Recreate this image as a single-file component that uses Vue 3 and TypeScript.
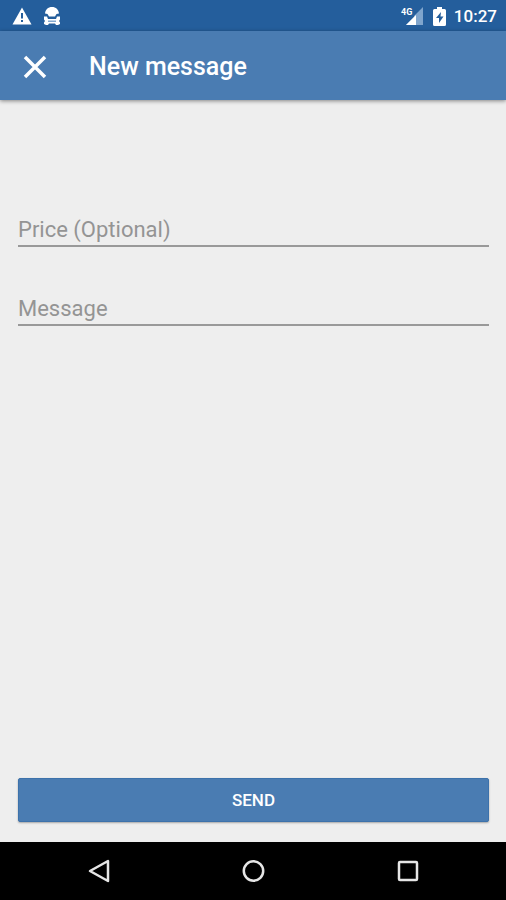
<script setup lang="ts">
import { ref } from 'vue'

const price = ref('')
const message = ref('')
const time = '10:27'
</script>

<template>
  <div class="screen">
    <div class="status">
      <div class="group notices">
        <svg width="20" height="18" viewBox="0 0 20 18" aria-hidden="true">
          <path d="M10 0.5 L19.5 17.500 H0.5 Z" fill="#fff" />
          <path d="M9 6h2v5.500h-2z M9 13h2v2h-2z" fill="#245e9c" />
        </svg>
        <svg width="18" height="20" viewBox="0 0 18 20" aria-hidden="true">
          <path d="M2 7.500C2.500 3.500 5 1 9 1s6.500 2.500 7 6.500l-2.500.5-1.500 2.500H6L4.500 8z" fill="#fff" />
          <path d="M1 10.500h3l1 2.500h8l1-2.500h3v3l-1 1.500 1 1.500V18l-2 1h-2l-1-1.500H6L5 19H3l-2-1v-1.500L2 15l-1-1.500z" fill="#fff" />
          <path d="M5 14.500h8v1.500H5z" fill="#83a8cf" />
        </svg>
      </div>
      <div class="group">
        <svg width="24" height="20" viewBox="0 0 24 20" aria-hidden="true">
          <path d="M22 1V19H5L13 11V10Z" fill="#7fa5cd" />
          <path d="M15 9V19H5Z" fill="#fff" />
          <text x="0" y="9" class="network">4G</text>
        </svg>
        <svg width="13" height="19" viewBox="0 0 13 19" aria-hidden="true">
          <path d="M4 0h5v2h2.500q1.500 0 1.500 1.500v14q0 1.500-1.500 1.500h-10Q0 19 0 17.500v-14Q0 2 1.500 2H4z" fill="#fff" />
          <path d="M8 5L3 11h3v5l4.500-6.500H7.500z" fill="#245e9c" />
        </svg>
        <span class="clock">{{ time }}</span>
      </div>
    </div>

    <header class="toolbar">
      <button class="close" type="button" aria-label="Close">
        <svg width="24" height="24" viewBox="0 0 24 24" aria-hidden="true">
          <path d="M2 2L22 22M22 2L2 22" stroke="#fff" stroke-width="3.500" />
        </svg>
      </button>
      <h1>New message</h1>
    </header>

    <form class="form" @submit.prevent>
      <input v-model="price" class="field" type="text" inputmode="decimal" placeholder="Price (Optional)" aria-label="Price (Optional)" />
      <input v-model="message" class="field" type="text" placeholder="Message" aria-label="Message" />
      <button class="send" type="submit">SEND</button>
    </form>

    <nav class="nav">
      <button type="button" aria-label="Back">
        <svg width="24" height="24" viewBox="0 0 24 24" aria-hidden="true">
          <path d="M21 2V22L3 12Z" />
        </svg>
      </button>
      <button type="button" aria-label="Home">
        <svg width="24" height="24" viewBox="0 0 24 24" aria-hidden="true">
          <circle cx="12.500" cy="12" r="9.700" />
        </svg>
      </button>
      <button type="button" aria-label="Recent apps">
        <svg width="24" height="24" viewBox="0 0 24 24" aria-hidden="true">
          <rect x="4" y="3" width="18" height="18" rx="1" />
        </svg>
      </button>
    </nav>
  </div>
</template>

<style>
body {
  margin: 0;
}
</style>

<style scoped>
.screen {
  display: flex;
  flex-direction: column;
  min-height: 100vh;
  background: #eee;
  font-family: Roboto, "Liberation Sans", sans-serif;
}

button {
  padding: 0;
  border: 0;
  background: none;
  font-family: inherit;
  cursor: pointer;
}

svg {
  display: block;
}

.status {
  display: flex;
  align-items: center;
  justify-content: space-between;
  box-sizing: border-box;
  height: 31px;
  padding: 1px 9px 0 12px;
  background: #245e9c;
  color: #fff;
}

.group {
  display: flex;
  align-items: center;
  gap: 8px;
}

.notices {
  gap: 11px;
}

.network {
  fill: #fff;
  font-size: 9px;
  font-weight: 700;
}

.clock {
  font-size: 17px;
  font-weight: 500;
  line-height: 30px;
}

.toolbar {
  display: flex;
  align-items: center;
  gap: 42px;
  box-sizing: border-box;
  height: 69px;
  padding: 2px 23px 0;
  background: #4a7cb2;
  box-shadow: 0 1px 4px rgba(0, 0, 0, 0.45);
  color: #fff;
}

h1 {
  margin: 0;
  font-size: 25px;
  font-weight: 500;
  line-height: 32px;
}

.form {
  display: flex;
  flex: 1;
  flex-direction: column;
  gap: 38px;
  padding: 106px 17px 20px 18px;
}

.field {
  box-sizing: border-box;
  width: 100%;
  height: 41px;
  padding: 8px 0 0;
  border: 0;
  border-bottom: 2px solid #999;
  border-radius: 0;
  outline: 0;
  background: transparent;
  color: #333;
  font-family: inherit;
  font-size: 22px;
}

.field::placeholder {
  color: #949494;
  opacity: 1;
}

.send {
  height: 44px;
  margin-top: auto;
  border: 1px solid #3d72ab;
  border-radius: 2px;
  background: #4a7cb2;
  box-shadow: 0 1px 2px rgba(0, 0, 0, 0.3);
  color: #fff;
  font-size: 17px;
  font-weight: 500;
}

.nav {
  display: flex;
  align-items: center;
  justify-content: center;
  gap: 130px;
  height: 58px;
  background: #000;
}

.nav svg {
  fill: none;
  stroke: #e6e6e6;
  stroke-width: 2.5;
  stroke-linejoin: round;
}
</style>
